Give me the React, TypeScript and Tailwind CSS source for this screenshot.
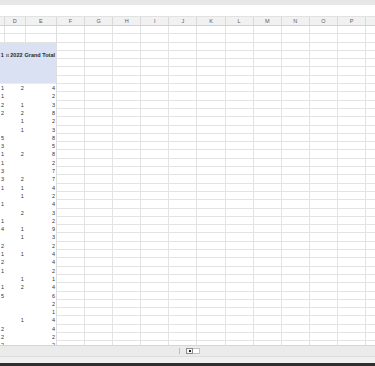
import React from "react";

const data: [string, string, string][] = [
  ["1", "2", "4"], ["1", "", "2"], ["2", "1", "3"], ["2", "2", "8"], ["", "1", "2"],
  ["", "1", "3"], ["5", "", "8"], ["3", "", "5"], ["1", "2", "8"], ["1", "", "2"],
  ["3", "", "7"], ["3", "2", "7"], ["1", "1", "4"], ["", "1", "2"], ["1", "", "4"],
  ["", "2", "3"], ["1", "", "2"], ["4", "1", "9"], ["", "1", "3"], ["2", "", "2"],
  ["1", "1", "4"], ["2", "", "4"], ["1", "", "2"], ["", "1", "1"], ["1", "2", "4"],
  ["5", "", "6"], ["", "", "2"], ["", "", "1"], ["", "1", "4"], ["2", "", "4"],
  ["2", "", "2"], ["2", "", "2"], ["1", "", "1"],
];

const rightCols = ["F", "G", "H", "I", "J", "K", "L", "M", "N", "O", "P"];
const rightRowCount = 40;

export default function App() {
  return (
    <div
      className="w-[375px] h-[366px] overflow-hidden bg-white flex flex-col text-[#333]"
      style={{ fontFamily: '"Liberation Sans", Arial, sans-serif' }}
    >
      {/* top band */}
      <div className="h-[5px] shrink-0 bg-[#e7e7e7]" />
      <div className="h-[11.5px] shrink-0 bg-white border-b border-[#e2e2e2]" />

      {/* column headers */}
      <div className="h-[9.5px] shrink-0 flex bg-[#f1f1f1] border-b border-[#d2d2d2] text-[5.5px] leading-[9px] text-[#5c5c5c]">
        <div className="w-[5px] shrink-0 border-r border-[#d8d8d8]" />
        <div className="w-[20.7px] shrink-0 border-r border-[#d8d8d8] text-center">D</div>
        <div className="w-[31.3px] shrink-0 border-r border-[#d8d8d8] text-center">E</div>
        {rightCols.map((c) => (
          <div key={c} className="w-[28.1px] shrink-0 border-r border-[#d8d8d8] text-center">
            {c}
          </div>
        ))}
        <div className="flex-1" />
      </div>

      {/* sheet body */}
      <div className="flex-1 flex overflow-hidden">
        {/* pivot area C-E */}
        <div className="w-[57px] shrink-0 flex flex-col border-r border-[#dedede]">
          {[0, 1].map((i) => (
            <div key={i} className="h-[8.3px] shrink-0 flex border-b border-[#e3e3e3]">
              <div className="w-[5px] border-r border-[#e3e3e3]" />
              <div className="w-[20.7px] border-r border-[#e3e3e3]" />
              <div className="flex-1" />
            </div>
          ))}
          <div className="h-[41.5px] shrink-0 flex bg-[#d9e1f3] border-b border-[#e8ecf6] text-[5.5px] font-bold text-[#2a2a2a] pt-[9.5px]">
            <div className="w-[5px] flex justify-end whitespace-nowrap pr-[1px] h-[7px] leading-[7px]">
              1
            </div>
            <div className="w-[20.7px] flex justify-end items-center gap-[0.8px] pr-[2px] h-[7px] leading-[7px]">
              <svg width="3" height="3" viewBox="0 0 6 6" className="shrink-0">
                <rect x="0.5" y="0.5" width="5" height="5" fill="none" stroke="#6b6b6b" strokeWidth="1" />
                <line x1="1.8" y1="3" x2="4.2" y2="3" stroke="#6b6b6b" strokeWidth="1" />
              </svg>
              <span>2022</span>
            </div>
            <div className="flex-1 flex justify-end whitespace-nowrap pr-[1px] h-[7px] leading-[7px]">
              Grand Total
            </div>
          </div>
          {data.map((r, i) => (
            <div key={i} className="h-[8.3px] shrink-0 flex text-[5.5px] leading-[8.3px]">
              <div className="w-[5px] text-right pr-[1px]">{r[0]}</div>
              <div className="w-[20.7px] text-right pr-[2px]">{r[1]}</div>
              <div className="flex-1 text-right pr-[1px]">{r[2]}</div>
            </div>
          ))}
        </div>

        {/* empty grid F onwards */}
        <div className="flex-1 flex flex-col overflow-hidden">
          {Array.from({ length: rightRowCount }).map((_, i) => (
            <div key={i} className="h-[8.3px] shrink-0 flex border-b border-[#e3e3e3]">
              {rightCols.map((c) => (
                <div key={c} className="w-[28.1px] shrink-0 border-r border-[#e3e3e3]" />
              ))}
              <div className="flex-1" />
            </div>
          ))}
        </div>
      </div>

      {/* sheet tab / scroll bar */}
      <div className="h-[11.5px] shrink-0 bg-[#ebebeb] border-t border-[#d6d6d6] flex items-center">
        <div className="w-[179px] shrink-0" />
        <div className="w-[1px] h-[6px] bg-[#bdbdbd]" />
        <div className="ml-[6px] flex h-[6px]">
          <div className="w-[7px] h-[6px] border border-[#8c8c8c] bg-[#f7f7f7] flex items-center justify-center">
            <div className="w-[2px] h-[2px] bg-[#222]" />
          </div>
          <div className="w-[7px] h-[6px] border border-l-0 border-[#c2c2c2] bg-white" />
        </div>
      </div>
      <div className="h-[6.7px] shrink-0 bg-[#f0f0f0] border-t border-[#dedede]" />
      <div className="h-[3.3px] shrink-0 bg-[#2f2f2f]" />
    </div>
  );
}
